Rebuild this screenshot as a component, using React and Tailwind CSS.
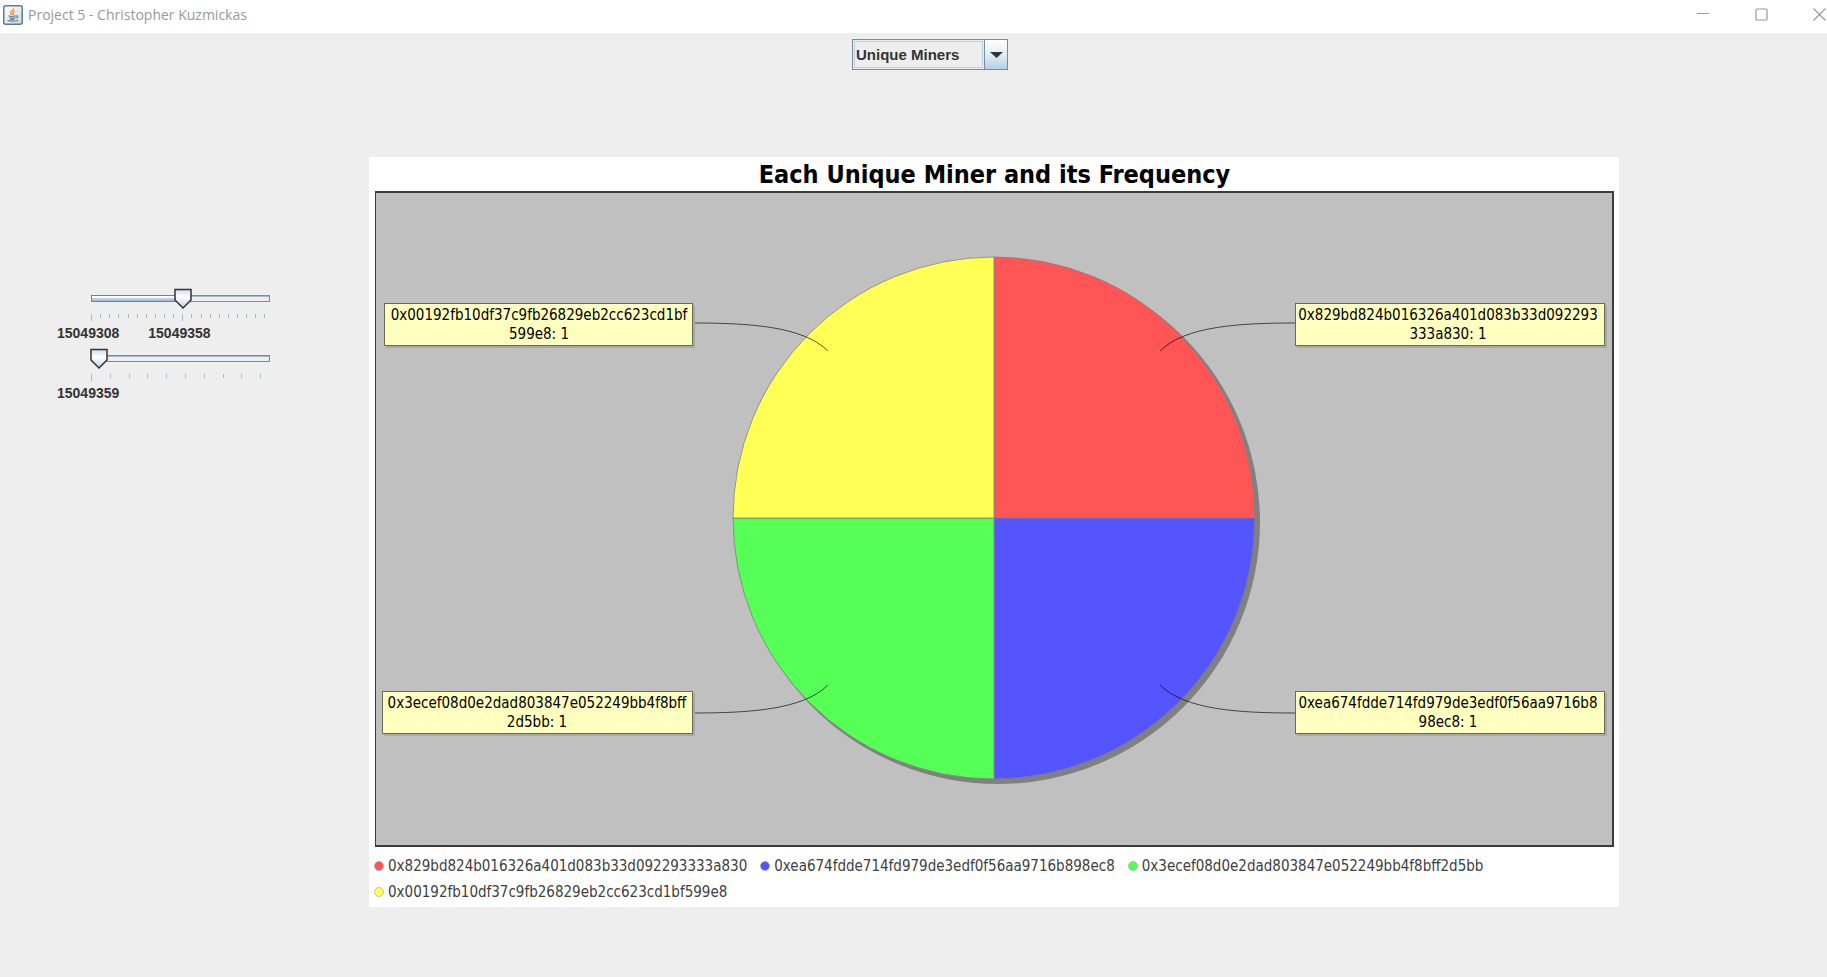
import { useState } from "react";

const MINERS = [
  { id: "0x829bd824b016326a401d083b33d092293333a830", count: 1, color: "#ff5555", slice: "M619 327V66A261 261 0 0 1 880 327Z", leader: "M785 160C810 135 865 132 920 132", box: [920, 112, 310], center: 1073, split: 35 },
  { id: "0xea674fdde714fd979de3edf0f56aa9716b898ec8", count: 1, color: "#5555ff", slice: "M619 327H880A261 261 0 0 1 619 588Z", leader: "M785 494C810 519 865 522 920 522", box: [920, 500, 310], center: 1073, split: 37 },
  { id: "0x3ecef08d0e2dad803847e052249bb4f8bff2d5bb", count: 1, color: "#55ff55", slice: "M619 327V588A261 261 0 0 1 358 327Z", leader: "M453 494C428 519 373 522 318 522", box: [7, 500, 311], center: 162, split: 37 },
  { id: "0x00192fb10df37c9fb26829eb2cc623cd1bf599e8", count: 1, color: "#ffff55", slice: "M619 327H358A261 261 0 0 1 619 66Z", leader: "M453 160C428 135 373 132 318 132", box: [9, 112, 309], center: 164, split: 37 },
];

function JavaIcon() {
  return (
    <svg width="20" height="20" viewBox="0 0 20 20" aria-hidden="true">
      <defs>
        <linearGradient id="java-bg" x1="0" y1="0" x2="1" y2="1">
          <stop offset="0" stopColor="#ffffff" />
          <stop offset="1" stopColor="#d5d7da" />
        </linearGradient>
      </defs>
      <rect x="0.75" y="0.75" width="18.5" height="18.5" rx="2" fill="url(#java-bg)" stroke="#5c7c98" strokeWidth="1.5" />
      <path d="M10.6 3.2C11.6 5 7 6 7.600 8C7.900 9 9 9.300 9.200 10M12 5.800C9.600 6.600 9.400 7.400 10.200 8.400C10.800 9.200 10.400 9.600 9.800 10.200" fill="none" stroke="#f0933f" strokeWidth="1.4" />
      <path d="M5.400 10.800C7 11.600 11 11.600 13 10.800M6.400 12.400C8 13.200 10.600 13.200 12.200 12.400M7 13.900C8.400 14.500 10.400 14.500 11.600 13.900M13 11C15.600 10.400 15.400 12.600 12.600 13.200" fill="none" stroke="#5f86a8" strokeWidth="1.100" />
      <path d="M4.400 15.300C6 16.500 13 16.500 15.400 15.300" fill="none" stroke="#5f86a8" strokeWidth="1.200" />
    </svg>
  );
}

function TitleBar() {
  return (
    <header className="flex h-[33px] items-center bg-white pr-3 pl-[3px]">
      <div className="flex grow items-center gap-[5px] pb-1">
        <JavaIcon />
        <h1 className="font-['Open_Sans','Noto_Sans',sans-serif] text-[14px] leading-5 text-[#999999]">
          Project 5 - Christopher Kuzmickas
        </h1>
      </div>
      <div className="flex self-start text-[#999999]">
        <button aria-label="Minimize" className="flex h-7 w-[58px] items-center justify-center">
          <svg width="13" height="13" viewBox="0 0 13 13"><path d="M0 5.500h12" stroke="currentColor" /></svg>
        </button>
        <button aria-label="Maximize" className="flex h-7 w-[58px] items-center justify-center">
          <svg width="13" height="13" viewBox="0 0 13 13"><rect x="1" y="1" width="11" height="11" rx="1" fill="none" stroke="currentColor" strokeWidth="1.2" /></svg>
        </button>
        <button aria-label="Close" className="flex h-7 w-[58px] items-center justify-center">
          <svg width="13" height="13" viewBox="0 0 13 13"><path d="M0.5 0.5l12 12M12.5 0.5l-12 12" stroke="currentColor" strokeWidth="1.2" /></svg>
        </button>
      </div>
    </header>
  );
}

function ViewSelect() {
  return (
    <div className="relative flex h-[31px] w-[156px] border border-[#7a8a99] bg-[#eeeeee]">
      <div className="m-px grow border border-[#b8cfe5]" />
      <div className="flex w-[23px] items-center justify-center border-l border-[#7a8a99] bg-linear-to-b from-white via-[#e4edf5] to-[#b8cfe5]">
        <svg width="13" height="6" viewBox="0 0 13 6"><path d="M0 0H13L6.500 6Z" fill="#333333" /></svg>
      </div>
      <select
        aria-label="Chart"
        className="absolute inset-0 w-full appearance-none bg-transparent pt-px pl-[3px] font-['Liberation_Sans',Arial,sans-serif] text-[15px] font-bold text-[#333333] outline-none"
      >
        <option>Unique Miners</option>
      </select>
    </div>
  );
}

function BlockSlider({ name, min, max, initial, ticks, step, major, filled, labels }) {
  const [value, setValue] = useState(initial);
  const x = Math.round(11 + ((value - min) / (max - min)) * 166);
  return (
    <div>
      <div className="relative ml-[31px] h-[34px] w-[184px]">
        <svg className="block" width="184" height="34" viewBox="0 0 184 34" aria-hidden="true">
          <defs>
            <linearGradient id="thumb" x1="0" y1="0" x2="0" y2="1">
              <stop offset="0" stopColor="#c8dcf0" />
              <stop offset="0.4" stopColor="#ffffff" />
              <stop offset="1" stopColor="#b8d2ea" />
            </linearGradient>
          </defs>
          <rect x="3.500" y="7.500" width="178" height="6" fill="#eeeeee" stroke="#7a8a99" />
          <path d="M4 8.500H181" stroke="#a3b8cc" />
          {filled && (
            <>
              <rect x="3.500" y="7.500" width={x - 3} height="6" fill="#a3b8cc" stroke="#6382bf" />
              <path d={`M4 9H${x}`} stroke="#ffffff" strokeWidth="2" />
              <path d={`M4 11H${x}`} stroke="#d8e2ec" />
            </>
          )}
          {Array.from({ length: ticks }, (_, i) => (
            <path key={i} d={`M${Math.round(3 + i * step) + 0.5} 26v${i % major === 0 ? 7 : 4}`} stroke="#a3b8cc" />
          ))}
          <path d={`M${x - 8} 1.500H${x + 8}V12L${x} 20L${x - 8} 12Z`} fill="url(#thumb)" stroke="#333333" strokeWidth="1.500" />
        </svg>
        <input
          type="range"
          aria-label={name}
          min={min}
          max={max}
          value={value}
          onChange={(e) => setValue(Number(e.target.value))}
          className="absolute inset-x-0 top-0 h-5 w-full cursor-pointer opacity-0"
        />
      </div>
      <div className="flex h-[22px] items-center gap-[29px] font-['Liberation_Sans',Arial,sans-serif] text-[14px] leading-5 font-bold text-[#333333]">
        {labels.map((l) => <span key={l}>{l}</span>)}
      </div>
    </div>
  );
}

function MinerPie() {
  return (
    <svg className="block w-full" viewBox="0 0 1239 656" role="img" aria-label="Each unique miner and its frequency">
      <rect x="0" y="0" width="1239" height="656" fill="#c0c0c0" />
      <circle cx="623" cy="331" r="262" fill="#808080" />
      {MINERS.map((m) => <path key={m.id} d={m.slice} fill={m.color} stroke="#808080" strokeWidth="0.800" />)}
      {MINERS.map((m) => {
        const [x, y, w] = m.box;
        return (
          <g key={m.id}>
            <path d={m.leader} fill="none" stroke="#000000" strokeOpacity="0.650" />
            <rect x={x + 2} y={y + 2} width={w} height="43" fill="#a9a9a9" />
            <rect x={x + 0.5} y={y + 0.5} width={w - 1} height="42" fill="#ffffc0" stroke="#6a6a50" />
            <g className="font-['DejaVu_Sans_Condensed','DejaVu_Sans',sans-serif] text-[15px]" textAnchor="middle" fill="#000000">
              <text x={m.center} y={y + 17}>{m.id.slice(0, m.split)}</text>
              <text x={m.center} y={y + 36}>{`${m.id.slice(m.split)}: ${m.count}`}</text>
            </g>
          </g>
        );
      })}
      <path d="M0 1H1239M1238 0V656M1239 655H0" stroke="#3c3c3c" strokeWidth="2" />
      <path d="M0.500 0V656" stroke="#3c3c3c" />
    </svg>
  );
}

export default function App() {
  return (
    <div className="min-h-screen overflow-hidden bg-[#eeeeee]">
      <div className="w-[calc(100%+33px)]">
        <TitleBar />
        <div className="flex justify-center pt-1.5">
          <ViewSelect />
        </div>
        <main className="flex items-start pt-[87px] pr-[241px] pl-[57px]">
          <section className="flex w-[312px] shrink-0 flex-col gap-1 pt-[131px]">
            <BlockSlider name="First block" min={15049308} max={15049407} initial={15049358} ticks={20} step={9.13} major={10} filled labels={["15049308", "15049358"]} />
            <BlockSlider name="Last block" min={15049359} max={15049407} initial={15049359} ticks={10} step={18.8} major={10} labels={["15049359"]} />
          </section>
          <section className="grow bg-white pt-[3px] pr-[5px] pl-1.5">
            <h2 className="pb-px text-center font-['DejaVu_Sans_Condensed','DejaVu_Sans',sans-serif] text-[25px] leading-[30px] font-bold text-black">
              Each Unique Miner and its Frequency
            </h2>
            <MinerPie />
            <ul className="-ml-px flex flex-wrap gap-x-[13px] pt-1.5 pb-0.5 font-['DejaVu_Sans_Condensed','DejaVu_Sans',sans-serif] text-[15px] leading-[26px] text-[#404040]">
              {MINERS.map((m) => (
                <li key={m.id} className="flex items-center gap-1">
                  <svg width="10" height="10" viewBox="0 0 10 10" aria-hidden="true"><circle cx="5" cy="5" r="4.500" fill={m.color} stroke="#a0a0a0" strokeWidth="0.600" /></svg>
                  {m.id}
                </li>
              ))}
            </ul>
          </section>
        </main>
      </div>
    </div>
  );
}
